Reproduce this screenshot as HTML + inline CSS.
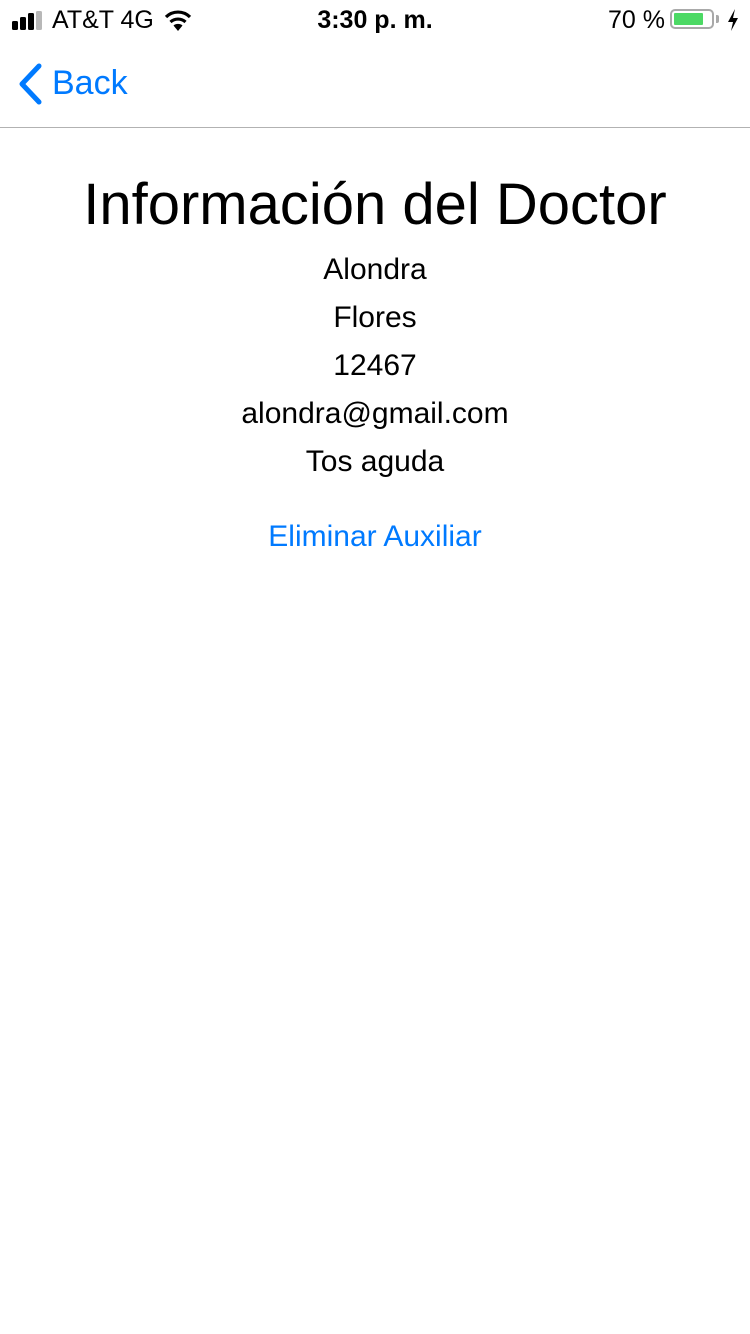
<!DOCTYPE html>
<html><head><meta charset="utf-8"><style>
body{margin:0;width:750px;height:1334px;background:#fff;font-family:"Liberation Sans",sans-serif;position:relative;overflow:hidden}
.a{position:absolute;white-space:nowrap}
.c{position:absolute;left:0;width:750px;text-align:center;white-space:nowrap}
.l{font-size:30px;color:#000;line-height:48px}
</style></head><body>
<svg class="a" style="left:12px;top:11px" width="34" height="20"><rect x="0" y="10" width="6" height="9" rx="1.5"/><rect x="8" y="6" width="6" height="13" rx="1.5"/><rect x="16" y="2" width="6" height="17" rx="1.5"/><rect x="24" y="0" width="6" height="19" rx="1.5" fill="#b8b8b8"/></svg>
<div class="a" style="left:52px;top:6px;font-size:25px">AT&amp;T 4G</div>
<svg class="a" style="left:164px;top:9px" width="28" height="22" viewBox="0 0 28 22"><path d="M14 22 L9.5 16.5 A7 7 0 0 1 18.5 16.5Z"/><path d="M6.5 13 A11 11 0 0 1 21.5 13" stroke="#000" stroke-width="3.2" fill="none"/><path d="M2 8 A17 17 0 0 1 26 8" stroke="#000" stroke-width="3.2" fill="none"/></svg>
<div class="c" style="top:6px;font-size:25px;font-weight:bold">3:30 p. m.</div>
<div class="a" style="left:608px;top:6px;font-size:25px">70 %</div>
<div class="a" style="left:670px;top:9px;width:44px;height:20px;border:2px solid #a9a9a9;border-radius:5px;box-sizing:border-box"></div>
<div class="a" style="left:674px;top:13px;width:29px;height:12px;background:#4cd964;border-radius:1px"></div>
<div class="a" style="left:716px;top:15px;width:3px;height:8px;background:#a9a9a9;border-radius:0 2px 2px 0"></div>
<svg class="a" style="left:727px;top:9px" width="12" height="22" viewBox="0 0 12 22"><path d="M8 0 L1 13 H6 L4 22 L11 9 H6Z"/></svg>
<svg class="a" style="left:16px;top:63px" width="28" height="42" viewBox="0 0 28 42"><path d="M23 3 L6 21 L23 39" stroke="#007aff" stroke-width="5" fill="none" stroke-linecap="round" stroke-linejoin="round"/></svg>
<div class="a" style="left:52px;top:64px;font-size:34px;color:#007aff">Back</div>
<div class="a" style="left:0;top:127px;width:750px;height:1px;background:#b2b2b2"></div>
<div class="c" style="top:171px;font-size:58px">Información del Doctor</div>
<div class="c l" style="top:246px">Alondra</div>
<div class="c l" style="top:294px">Flores</div>
<div class="c l" style="top:342px">12467</div>
<div class="c l" style="top:390px">alondra@gmail.com</div>
<div class="c l" style="top:438px">Tos aguda</div>
<div class="c l" style="top:513px;color:#007aff">Eliminar Auxiliar</div>
</body></html>
